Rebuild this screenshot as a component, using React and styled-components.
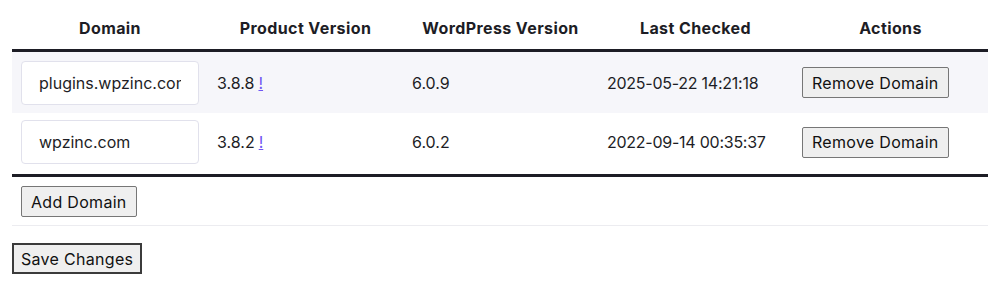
import React from 'react';
import styled, { createGlobalStyle } from 'styled-components';

const GlobalStyle = createGlobalStyle`
  body {
    margin: 0;
    background: #ffffff;
    font-family: Inter, "Liberation Sans", sans-serif;
    color: #1d1d25;
  }
`;

const Page = styled.div`
  padding: 0 20px 0 12px;
`;

const Grid = styled.div`
  display: grid;
  grid-template-columns: repeat(5, 1fr);
  width: 976px;
`;

const HeadCell = styled.div`
  height: 52px;
  padding-top: 17px;
  box-sizing: border-box;
  text-align: center;
  font-weight: 700;
  font-size: 16px;
  line-height: 22px;
  border-bottom: 3px solid #1d1d25;
  letter-spacing: 0.4px;
`;

const Cell = styled.div`
  box-sizing: border-box;
  padding: 0 9px;
  display: flex;
  align-items: center;
  font-size: 16px;
  letter-spacing: ${(p) => (p.$numeric ? '-0.25px' : '0')};
  background: ${(p) => (p.$shaded ? '#f6f6fa' : '#ffffff')};
  border-bottom: ${(p) => (p.$last ? '3px solid #1d1d25' : 'none')};
  height: ${(p) => (p.$last ? '64px' : '61px')};
  padding-bottom: ${(p) => (p.$last ? '3px' : '0')};
`;

const DomainInput = styled.input`
  width: 178px;
  height: 44px;
  box-sizing: border-box;
  border: 1px solid #e1e1ec;
  border-radius: 4px;
  background: #fff;
  padding: 0 17px;
  font: inherit;
  font-size: 16px;
  color: #1d1d25;
  outline: none;
`;

const Hint = styled.a`
  color: #6f56f3;
  margin-left: 4px;
  text-decoration: underline;
`;

const Button = styled.button`
  font-family: inherit;
  font-size: 16px;
  letter-spacing: 0.3px;
  color: #111;
  background: #efefef;
  border: ${(p) => (p.$primary ? '2px solid #3b3b3b' : '1px solid #767676')};
  border-radius: ${(p) => (p.$primary ? '0' : '2px')};
  height: 31px;
  padding: 0 ${(p) => (p.$primary ? '7px' : '9px')};
  cursor: pointer;
`;

const FooterRow = styled.div`
  width: 976px;
  height: 49px;
  box-sizing: border-box;
  padding: 9px 9px 0;
  border-bottom: 1px solid #ececf0;
`;

const SaveRow = styled.div`
  padding-top: 17px;
`;

const rows = [
  { domain: 'plugins.wpzinc.com', product: '3.8.8', wp: '6.0.9', checked: '2025-05-22 14:21:18' },
  { domain: 'wpzinc.com', product: '3.8.2', wp: '6.0.2', checked: '2022-09-14 00:35:37' },
];

const headers = ['Domain', 'Product Version', 'WordPress Version', 'Last Checked', 'Actions'];

export default function App() {
  return (
    <Page>
      <GlobalStyle />
      <Grid>
        {headers.map((h) => (
          <HeadCell key={h}>{h}</HeadCell>
        ))}
        {rows.map((r, i) => {
          const shaded = i % 2 === 0;
          const last = i === rows.length - 1;
          return (
            <React.Fragment key={r.domain}>
              <Cell $shaded={shaded} $last={last}>
                <DomainInput defaultValue={r.domain} />
              </Cell>
              <Cell $shaded={shaded} $last={last}>
                {r.product}
                <Hint href="#">!</Hint>
              </Cell>
              <Cell $shaded={shaded} $last={last}>{r.wp}</Cell>
              <Cell $shaded={shaded} $last={last} $numeric>{r.checked}</Cell>
              <Cell $shaded={shaded} $last={last}>
                <Button>Remove Domain</Button>
              </Cell>
            </React.Fragment>
          );
        })}
      </Grid>
      <FooterRow>
        <Button>Add Domain</Button>
      </FooterRow>
      <SaveRow>
        <Button $primary>Save Changes</Button>
      </SaveRow>
    </Page>
  );
}
